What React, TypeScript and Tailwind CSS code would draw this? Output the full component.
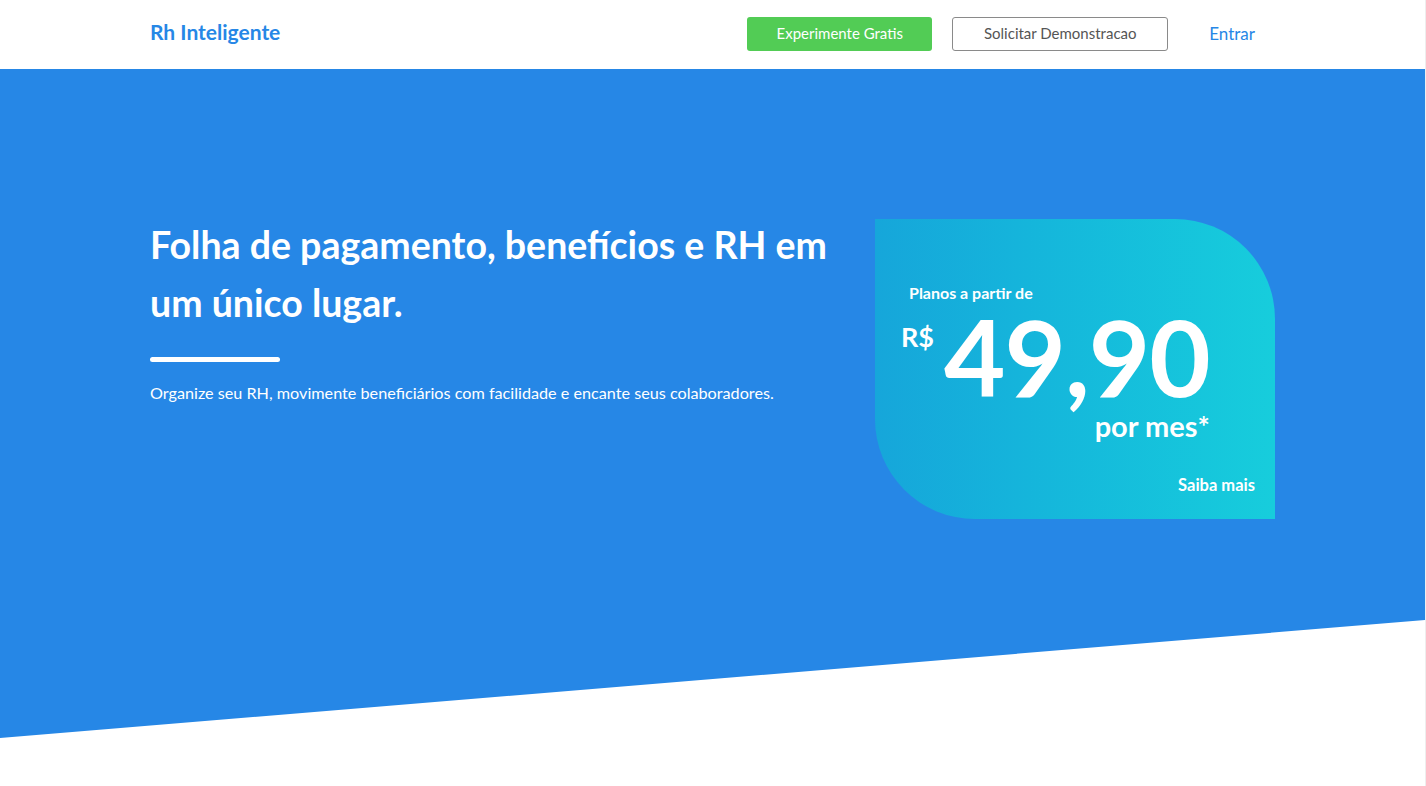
import React from 'react';

const font = { fontFamily: '"Lato", "Noto Sans", sans-serif' };

const Header = () => (
  <header className="h-[69px] bg-white">
    <div className="mx-auto flex h-full w-[1125px] items-center justify-between">
      <a className="mb-[5px] text-[21px] font-bold text-[#2687e6]">Rh Inteligente</a>
      <nav className="mb-[2px] flex items-center">
        <button className="h-[34px] w-[185px] rounded-[3px] bg-[#52cc55] text-[15px] text-white">
          Experimente Gratis
        </button>
        <button className="ml-[20px] h-[34px] w-[216px] rounded-[3px] border border-[#8a8a8a] bg-white text-[15px] text-[#555]">
          Solicitar Demonstracao
        </button>
        <a className="ml-[41px] mr-[20px] text-[17px] text-[#2687e6]">Entrar</a>
      </nav>
    </div>
  </header>
);

const PriceCard = () => (
  <div className="flex h-[300px] w-[400px] flex-col rounded-tr-[100px] rounded-bl-[100px] bg-gradient-to-r from-[#16a6da] to-[#17cddc] pl-[34px] pr-[20px] pt-[63px] pb-[21px] text-white">
    <div className="flex w-fit flex-col">
      <span className="text-[16px] font-bold leading-[22px]">Planos a partir de</span>
      <div className="-ml-[8px] flex items-start">
        <span className="mt-[18px] text-[27px] font-bold leading-[30px]">R$</span>
        <span className="ml-[10px] mt-[2px] text-[106px] font-bold leading-[100px] tracking-[-1px]">49,90</span>
      </div>
      <span className="mt-[4px] self-end text-[29px] font-bold leading-[32px]">por mes*</span>
    </div>
    <a className="mt-auto self-end text-[16.5px] font-bold">Saiba mais</a>
  </div>
);

export default function App() {
  return (
    <div style={font} className="min-h-screen border-r border-[#eeeeee] bg-white">
      <Header />
      <section className="h-[669px] bg-[#2687e6] [clip-path:polygon(0_0,100%_0,100%_551px,0_669px)]">
        <div className="mx-auto flex w-[1125px] items-start justify-between pt-[150px]">
          <div className="w-[700px] text-white">
            <h1 className="-mt-[3px] text-[37.5px] font-bold leading-[58px]">
              Folha de pagamento, benefícios e RH em um único lugar.
            </h1>
            <div className="mt-[25px] h-[5px] w-[130px] rounded-full bg-white" />
            <p className="mt-[19px] text-[16.2px] leading-[24px]">
              Organize seu RH, movimente beneficiários com facilidade e encante seus colaboradores.
            </p>
          </div>
          <PriceCard />
        </div>
      </section>
    </div>
  );
}
